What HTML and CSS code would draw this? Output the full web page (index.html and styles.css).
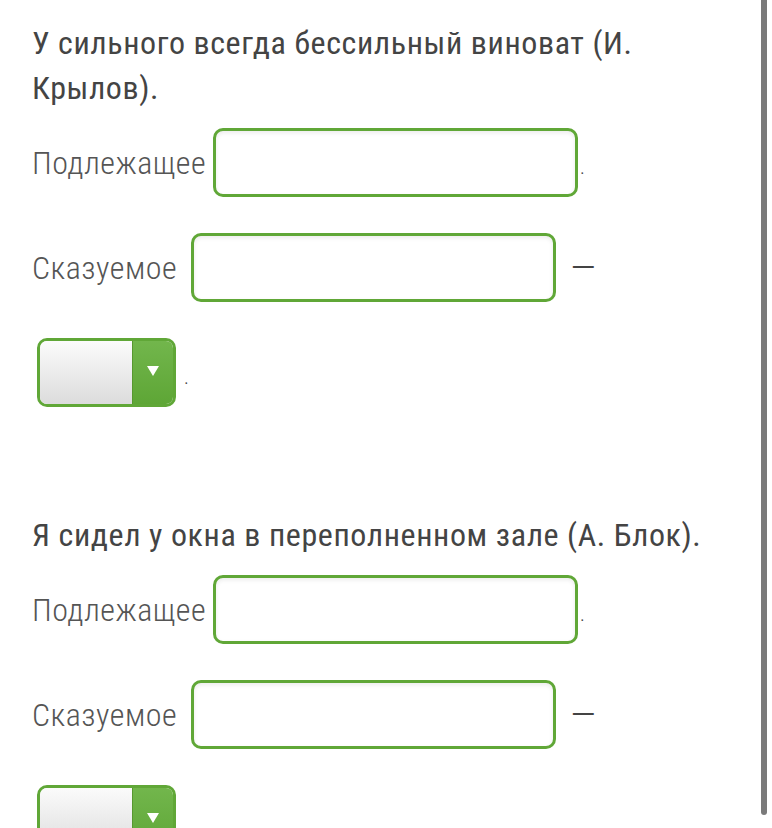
FILE: index.html
```html
<html>
	<head>
		<title>Члены предложения</title>
		<link rel="stylesheet" href="styles.css">
	</head>
	<body>

		<div class="Task">
			<p class="Sentence">У сильного всегда бессильный виноват (И. Крылов).</p>

			<div class="Row">
				<span class="Label">Подлежащее</span>
				<input type="text" class="Answer Subject"/>
				<span class="Mark Dot">.</span>
			</div>
			<div class="Row">
				<span class="Label">Сказуемое</span>
				<input type="text" class="Answer Predicate"/>
				<span class="Mark Dash">—</span>
			</div>
			<div class="Row">
				<div class="Select">
					<div class="SelectValue"></div>
					<div class="SelectButton"><span class="Arrow"></span></div>
				</div>
				<span class="Mark Dot After">.</span>
			</div>
		</div>

		<div class="Task">
			<p class="Sentence">Я сидел у окна в переполненном зале (А. Блок).</p>

			<div class="Row">
				<span class="Label">Подлежащее</span>
				<input type="text" class="Answer Subject"/>
				<span class="Mark Dot">.</span>
			</div>
			<div class="Row">
				<span class="Label">Сказуемое</span>
				<input type="text" class="Answer Predicate"/>
				<span class="Mark Dash">—</span>
			</div>
			<div class="Row">
				<div class="Select">
					<div class="SelectValue"></div>
					<div class="SelectButton"><span class="Arrow"></span></div>
				</div>
				<span class="Mark Dot After">.</span>
			</div>
		</div>

		<div class="Scroll"></div>
	</body>
</html>
```

FILE: styles.css
```css
html, body {margin: 0; height: 100%; overflow: hidden; background-color: white;}

body {
	font-family: Roboto, "Liberation Sans", sans-serif;
	font-stretch: 87%;
	padding: 21px 24px 0 32px;
	box-sizing: border-box;
}

.Task {
	margin-bottom: 106px;
}

.Sentence {
	margin: 0 0 17px 0;
	font-size: 32px;
	line-height: 45px;
	font-weight: 400;
	letter-spacing: 0.6px;
	color: #444;
}

.Row {
	display: flex;
	align-items: center;
	height: 69px;
	margin-bottom: 36px;
}

.Label {
	font-size: 32px;
	font-weight: 300;
	letter-spacing: 0.5px;
	color: #555;
	line-height: 40px;
}

.Answer {
	width: 365px;
	height: 69px;
	box-sizing: border-box;
	border: 3px solid #60a737;
	border-radius: 10px;
	background-color: white;
	box-shadow: inset 0 2px 4px rgba(0, 0, 0, 0.08);
	outline: none;
	padding: 0 12px;
	font-family: inherit;
	font-size: 28px;
}

.Subject {
	margin-left: 7px;
}

.Predicate {
	margin-left: 14px;
}

.Mark {
	font-size: 20px;
	font-weight: 300;
	color: #444;
	line-height: 24px;
}

.Dot {
	margin-left: 2px;
	margin-top: 8px;
}

.Dot.After {
	margin-left: 8px;
}

.Dash {
	font-size: 38px;
	line-height: 40px;
	margin-left: 14px;
}

.Select {
	display: flex;
	width: 139px;
	height: 69px;
	box-sizing: border-box;
	margin-left: 5px;
	border: 3px solid #60a737;
	border-radius: 10px;
	overflow: hidden;
}

.SelectValue {
	flex: 1;
	background: linear-gradient(#fbfbfb, #dcdcdc);
}

.SelectButton {
	width: 40px;
	display: flex;
	align-items: center;
	justify-content: center;
	border-left: 1px solid #57982f;
	background: linear-gradient(#72b64c, #5ea636);
}

.Arrow {
	width: 0;
	height: 0;
	border-left: 6px solid transparent;
	border-right: 6px solid transparent;
	border-top: 10px solid white;
	margin-top: -3px;
}

/* scrollbar thumb drawn over the page */
.Scroll {
	position: fixed;
	top: 0;
	right: 5px;
	width: 6px;
	height: 815px;
	background-color: #7a7a7a;
	border-radius: 0 0 3px 3px;
}
```
